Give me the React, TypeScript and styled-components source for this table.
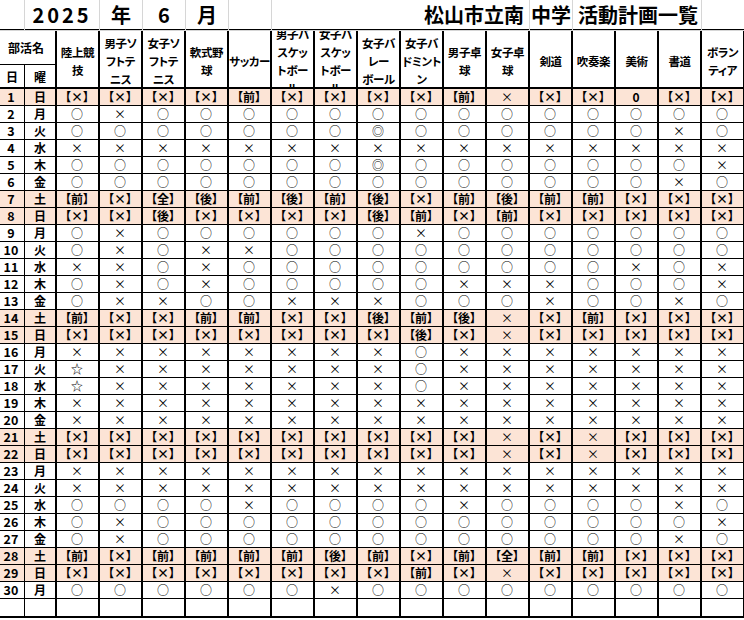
import React from "react";
import styled, { createGlobalStyle } from "styled-components";

const COLS = "25px 32px repeat(16, 43px)";
const PEACH = "#fce4d6";

const GlobalStyle = createGlobalStyle`
  *, *::before, *::after { box-sizing: border-box; }
  html, body { margin: 0; padding: 0; background: #fff; }
  body {
    font-family: "Noto Sans CJK JP", "Noto Sans", sans-serif;
    color: #000;
    overflow: hidden;
    font-feature-settings: "palt";
  }
`;

const Sheet = styled.div`
  width: 744px;
  height: 620px;
  overflow: hidden;
`;

const TitleRow = styled.div`
  display: grid;
  grid-template-columns: ${COLS};
  height: 27px;
`;

const TitleCell = styled.div<{ $span?: number; $align?: string; $pad?: number; $spacing?: number }>`
  grid-column: span ${p => p.$span ?? 1};
  border-right: 1px solid #d6d6d6;
  border-bottom: 1px solid #d6d6d6;
  display: flex;
  align-items: center;
  justify-content: ${p => p.$align ?? "center"};
  padding: 0 ${p => p.$pad ?? 0}px 1px;
  font-size: 20px;
  font-weight: 700;
  letter-spacing: ${p => p.$spacing ?? 0}px;
  white-space: nowrap;
`;

const Table = styled.div`
  display: grid;
  grid-template-columns: ${COLS};
  grid-template-rows: 34px 24px repeat(30, 17px) 19px;
  margin-top: 2px;
  border-top: 2px solid #000;
`;

const ClubLabel = styled.div`
  grid-column: 1 / 3;
  grid-row: 1;
  border-right: 2px solid #000;
  border-bottom: 1px solid #000;
  display: flex;
  align-items: center;
  justify-content: center;
  padding-right: 3px;
  font-size: 12px;
  font-weight: 700;
`;

const HeadSmall = styled.div<{ $thick?: boolean }>`
  grid-row: 2;
  border-right: ${p => (p.$thick ? 2 : 1)}px solid #000;
  border-bottom: 2px solid #000;
  display: flex;
  align-items: center;
  justify-content: center;
  font-size: 12px;
  font-weight: 700;
`;

const SportHead = styled.div`
  grid-row: 1 / 3;
  border-right: 2px solid #000;
  border-bottom: 2px solid #000;
  padding-top: 4px;
  overflow: hidden;
  display: flex;
  flex-direction: column;
  align-items: center;
  justify-content: center;
  font-size: 11.5px;
  font-weight: 700;
  letter-spacing: -0.4px;
  line-height: 18px;
  white-space: nowrap;
`;

const Cell = styled.div<{ $shade?: boolean; $thick?: boolean; $last?: boolean }>`
  background: ${p => (p.$shade ? PEACH : "#fff")};
  border-right: ${p => (p.$thick ? 2 : 1)}px solid #000;
  border-bottom: ${p => (p.$last ? 2 : 1)}px solid #000;
  display: flex;
  align-items: center;
  justify-content: center;
  white-space: nowrap;
  line-height: 1;
`;

const DayNum = styled(Cell)`
  font-size: 12.5px;
  font-weight: 700;
  padding-right: 2px;
`;

const WeekDay = styled(Cell)`
  font-size: 12px;
  font-weight: 700;
`;

const Mark = styled(Cell)<{ $bold?: boolean }>`
  font-size: 12px;
  font-weight: ${p => (p.$bold ? 700 : 400)};
  padding-right: 1px;
`;

const clubs: string[][] = [
  ["陸上競", "技"],
  ["男子ソ", "フトテ", "ニス"],
  ["女子ソ", "フトテ", "ニス"],
  ["軟式野", "球"],
  ["サッカー"],
  ["男子バ", "スケッ", "トボー", "ル"],
  ["女子バ", "スケッ", "トボー", "ル"],
  ["女子バ", "レー", "ボール"],
  ["女子バ", "ドミント", "ン"],
  ["男子卓", "球"],
  ["女子卓", "球"],
  ["剣道"],
  ["吹奏楽"],
  ["美術"],
  ["書道"],
  ["ボラン", "ティア"],
];

// o=○ x=× X=【×】 W=◎ S=☆, kanji = 【kanji】
const MARKS: Record<string, [string, boolean]> = {
  o: ["○", false],
  x: ["×", false],
  X: ["【×】", true],
  前: ["【前】", true],
  後: ["【後】", true],
  全: ["【全】", true],
  W: ["◎", false],
  S: ["☆", false],
  "0": ["0", true],
};

// each day: first 7 clubs, then the other 9
const plan: [string, string][] = [
  ["XXXX前XX", "XX前xXX0XX"],
  ["oxooooo", "ooooooooo"],
  ["ooooooo", "Wooooooxo"],
  ["xxxxxxx", "xxxxxxxxx"],
  ["ooooooo", "Wooooooox"],
  ["ooooooo", "oooooooxo"],
  ["前X全後前後前", "後X前後前前XXX"],
  ["XX後XXXX", "後前X前XXXXX"],
  ["oxooooo", "oxooooooo"],
  ["oxoxxoo", "ooooooooo"],
  ["xxoxooo", "ooooooxox"],
  ["oxoxooo", "ooxxxooox"],
  ["oxxooxx", "xoooxooxo"],
  ["前XX前前XX", "後前後xX前XXX"],
  ["XXXXXXX", "X後XxXXXXX"],
  ["xxxxxxx", "xoxxxxxxx"],
  ["Sxxxxxx", "xoxxxxxxx"],
  ["Sxxxxxx", "xoxxxxxxx"],
  ["xxxxxxx", "xxxxxxxxx"],
  ["xxxxxxx", "xxxxxxxxx"],
  ["XXXXXXX", "XXXxXxXXX"],
  ["XXXXXXX", "XXXxXxXXX"],
  ["xxxxxxx", "xxxxxxxxx"],
  ["xxxxxxx", "xxxxxxxxx"],
  ["ooooxoo", "ooxooooxo"],
  ["oxooooo", "oooooooox"],
  ["oxooooo", "oooooooxo"],
  ["前X前前前前後", "前X前全前前XXX"],
  ["XXXXXXX", "X前XxXXXXX"],
  ["oooooox", "ooooooooo"],
];

const WEEK = ["日", "月", "火", "水", "木", "金", "土"];

export default function App() {
  return (
    <Sheet>
      <GlobalStyle />
      <TitleRow>
        <TitleCell />
        <TitleCell $span={2} $spacing={3}>2025</TitleCell>
        <TitleCell>年</TitleCell>
        <TitleCell>6</TitleCell>
        <TitleCell>月</TitleCell>
        <TitleCell />
        <TitleCell $span={6} $align="flex-end" $pad={5}>松山市立南</TitleCell>
        <TitleCell>中学</TitleCell>
        <TitleCell $span={3} $align="flex-start" $pad={5}>活動計画一覧</TitleCell>
        <TitleCell />
      </TitleRow>

      <Table>
        <ClubLabel>部活名</ClubLabel>
        {clubs.map((lines, i) => (
          <SportHead key={i} style={{ gridColumn: i + 3 }}>
            {lines.map(l => (
              <span key={l}>{l}</span>
            ))}
          </SportHead>
        ))}
        <HeadSmall style={{ gridColumn: 1 }}>日</HeadSmall>
        <HeadSmall $thick style={{ gridColumn: 2 }}>曜</HeadSmall>

        {plan.map(([left, right], r) => {
          const wd = r % 7;
          const shade = wd === 0 || wd === 6;
          return (
            <React.Fragment key={r}>
              <DayNum $shade={shade}>{r + 1}</DayNum>
              <WeekDay $shade={shade} $thick>{WEEK[wd]}</WeekDay>
              {Array.from(left + right).map((c, i) => {
                const [text, bold] = MARKS[c];
                return (
                  <Mark key={i} $shade={shade} $thick $bold={bold}>
                    {text}
                  </Mark>
                );
              })}
            </React.Fragment>
          );
        })}
        <Cell $last />
        <Cell $last $thick />
        {clubs.map((_, i) => (
          <Cell key={i} $last $thick />
        ))}
      </Table>
    </Sheet>
  );
}
